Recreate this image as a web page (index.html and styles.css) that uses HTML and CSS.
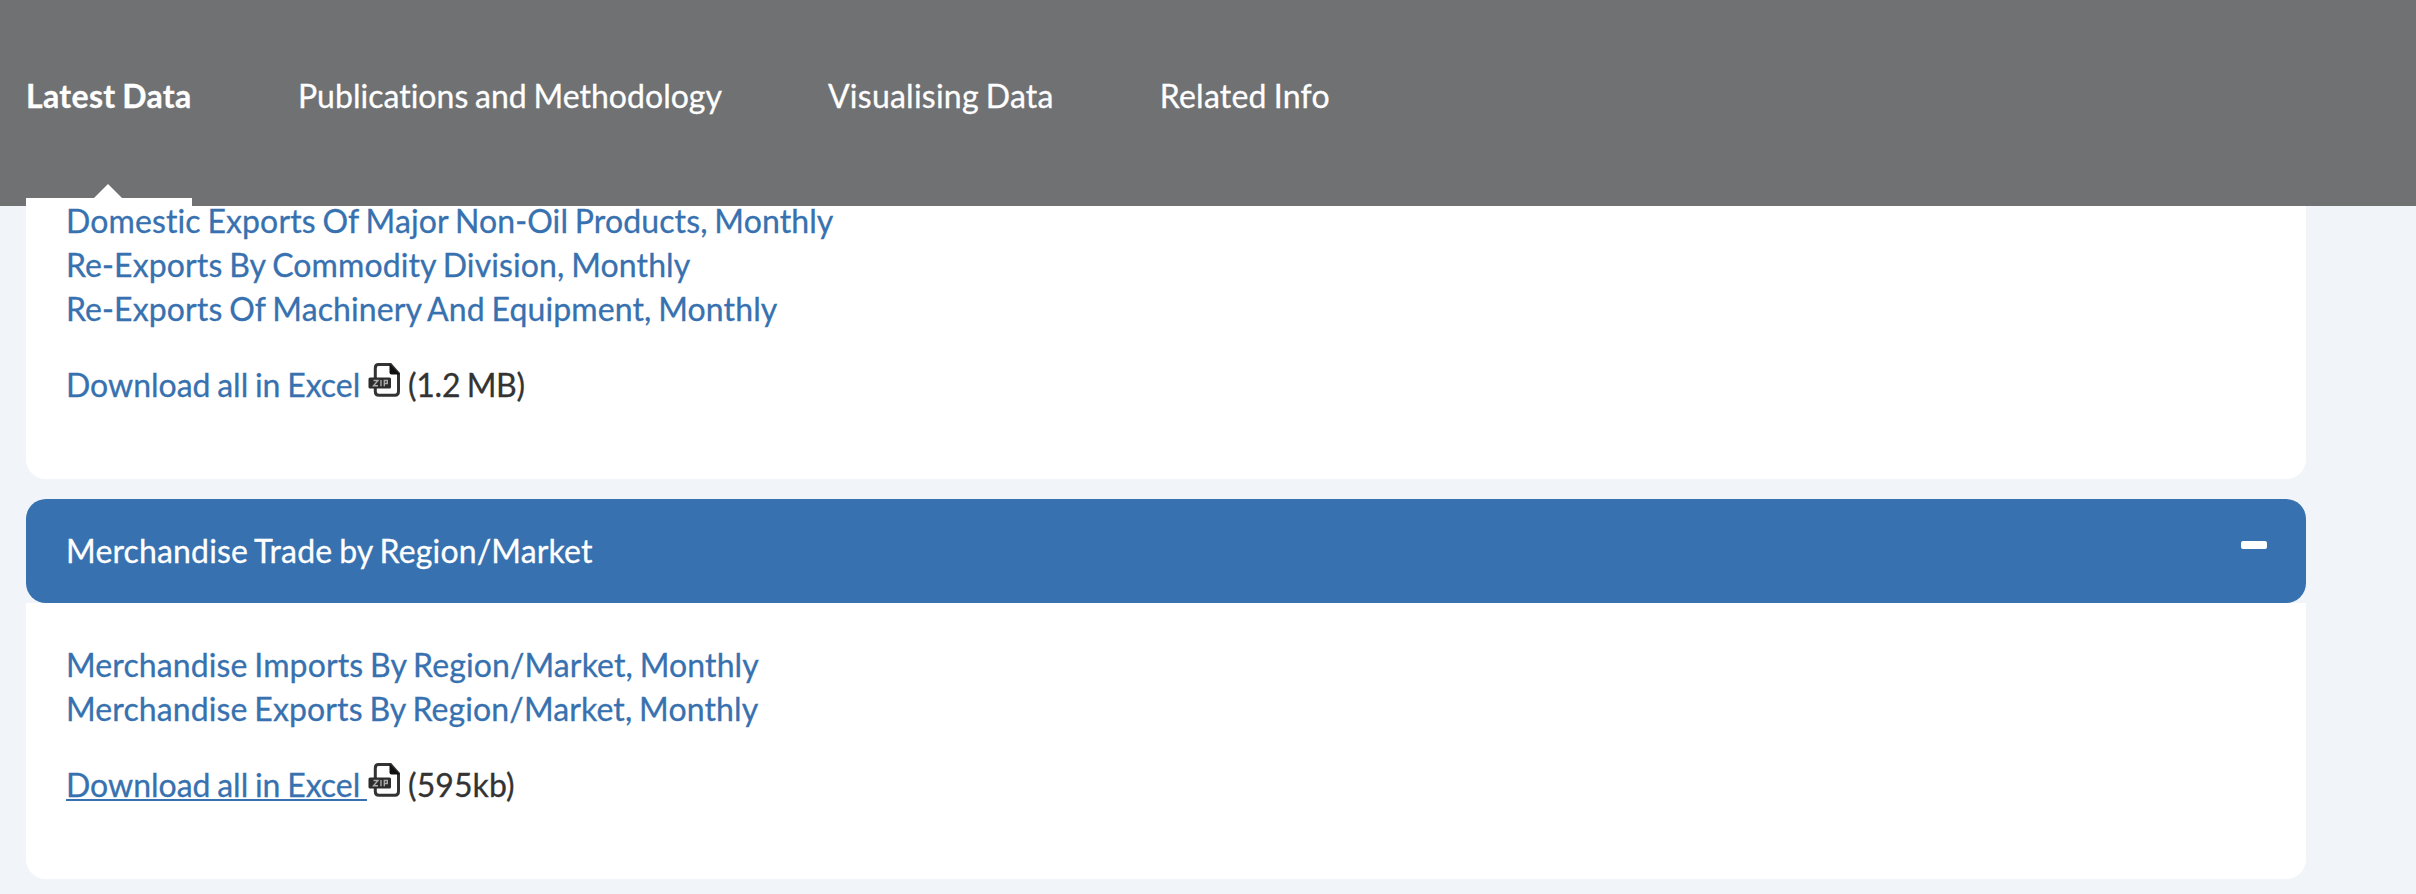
FILE: index.html
```html
<!DOCTYPE html>
<html lang="en">
<head>
<meta charset="utf-8">
<title>Merchandise Trade</title>
<link rel="stylesheet" href="styles.css">
</head>
<body>
<svg class="defs" width="0" height="0">
  <symbol id="zip" viewBox="0 0 34 34">
    <path d="M10.5 1.6H22.500L30.500 10.500V28Q30.500 32.300 27 32.300H11Q7.300 32.300 7.300 28.500V5.200Q7.300 1.600 10.500 1.600Z" fill="#fff" stroke="#333" stroke-width="3"/>
    <path d="M21.500 1L32 11.500H23.500Q21.500 11.500 21.500 9.500Z" fill="#111"/>
    <rect x="0.500" y="14.500" width="22.500" height="11" rx="1.500" fill="#2c2c2c"/>
    <path d="M5.500 17.500H10L5.500 22.800H10M13 17V23.300M16.300 23.300V17.500H19.300V20.500H16.300" fill="none" stroke="#aaa" stroke-width="1.400"/>
  </symbol>
</svg>
<header class="tabs">
  <a class="tab tab-active">Latest Data</a>
  <a class="tab">Publications and Methodology</a>
  <a class="tab tab-wide">Visualising Data</a>
  <a class="tab tab-wide">Related Info</a>
</header>
<main class="accordion">
  <section class="panel">
    <ul class="links">
      <li><a>Domestic Exports Of Major Non-Oil Products, Monthly</a></li>
      <li><a>Re-Exports By Commodity Division, Monthly</a></li>
      <li><a>Re-Exports Of Machinery And Equipment, Monthly</a></li>
    </ul>
    <p class="download"><a>Download all in Excel </a><svg class="zip"><use href="#zip"/></svg><span class="size size-mb">(1.2 MB)</span></p>
  </section>
  <h2 class="heading"><span>Merchandise Trade by Region/Market</span><i class="minus"></i></h2>
  <section class="panel">
    <ul class="links">
      <li><a>Merchandise Imports By Region/Market, Monthly</a></li>
      <li><a>Merchandise Exports By Region/Market, Monthly</a></li>
    </ul>
    <p class="download"><a class="hovered">Download all in Excel </a><svg class="zip"><use href="#zip"/></svg><span class="size">(595kb)</span></p>
  </section>
</main>
</body>
</html>
```
FILE: styles.css
```css
* { box-sizing: border-box; }
body {
  margin: 0;
  height: 894px;
  overflow: hidden;
  background: #f1f5fa;
  color: #333;
  font: 32px/44px Lato, sans-serif;
  font-variant-ligatures: none;
  letter-spacing: 0.11px;
  word-spacing: -1.5px;
  -webkit-text-stroke: 0.3px currentColor;
}
.defs { display: block; }
.tabs {
  position: relative;
  z-index: 1;
  display: flex;
  gap: 106px;
  height: 206px;
  padding: 74px 26px 0;
  background: #707173;
  color: #fff;
}
.tab { position: relative; white-space: nowrap; letter-spacing: 0.02px; }
.tab-wide { letter-spacing: 0.24px; }
.tab-active { font-weight: 700; width: 166px; letter-spacing: 0.35px; }
.tab-active::before {
  content: "";
  position: absolute;
  left: 0;
  right: 0;
  bottom: 0;
  height: 8px;
  background: #fff;
}
.tab-active::after {
  content: "";
  position: absolute;
  left: 68px;
  bottom: 8px;
  border: 14px solid transparent;
  border-top: 0;
  border-bottom-color: #fff;
}
.accordion { width: 2280px; margin: -47px 0 0 26px; }
.panel {
  padding: 40px 40px 72px;
  background: #fff;
  border-radius: 0 0 20px 20px;
}
.links { margin: 0; padding: 0; list-style: none; color: #3771af; }
.download { margin: 32px 0 0; height: 44px; white-space: pre; }
.download a { color: #3771af; letter-spacing: 0; }
.download .hovered {
  text-decoration: underline;
  text-decoration-thickness: 2px;
  text-underline-offset: 2px;
}
.zip { width: 34px; height: 34px; margin-left: 1px; }
.size { margin-left: 6px; letter-spacing: 0.1px; }
.size-mb { letter-spacing: -0.25px; }
.heading {
  display: flex;
  justify-content: space-between;
  height: 104px;
  margin: 20px 0 0;
  padding: 30px 39px 30px 40px;
  background: #3771af;
  border-radius: 20px;
  color: #fff;
  font: inherit;
  font-variant-ligatures: none;
  letter-spacing: 0.16px;
}
.minus {
  width: 26px;
  height: 8px;
  margin-top: 12px;
  background: #fff;
  border-radius: 2px;
}
```
